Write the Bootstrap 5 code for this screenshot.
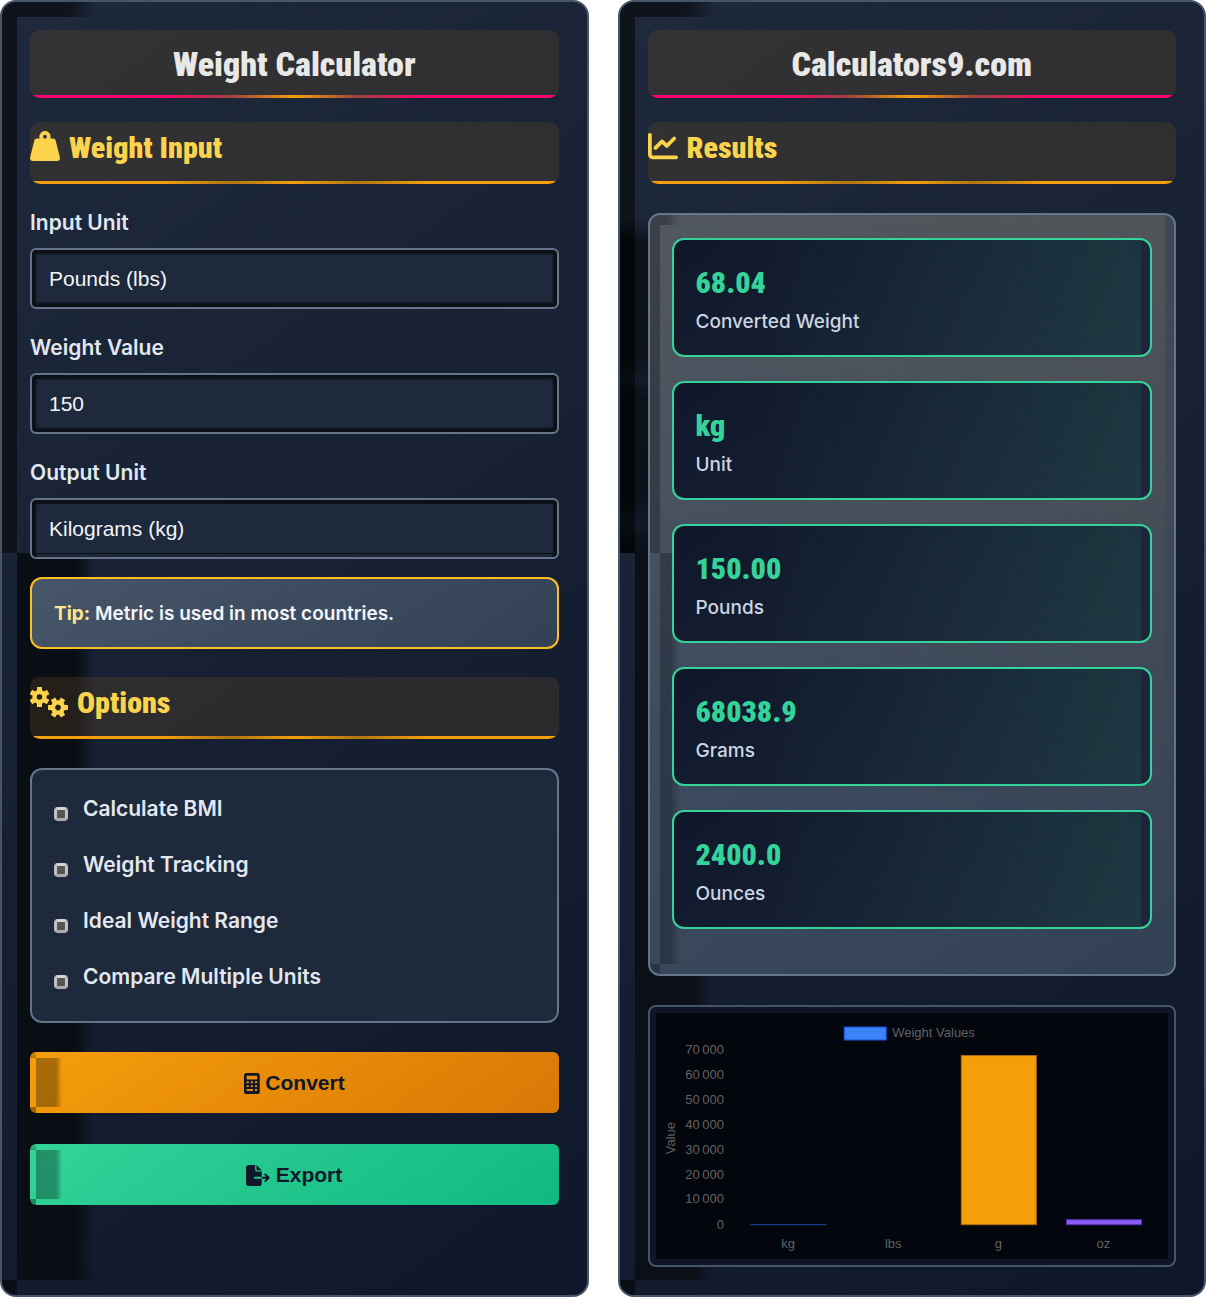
<!DOCTYPE html>
<html lang="en">
<head>
<meta charset="utf-8">
<meta name="viewport" content="width=device-width, initial-scale=1">
<title>Weight Calculator</title>
<link href="https://cdn.jsdelivr.net/npm/bootstrap@5.3.0/dist/css/bootstrap.min.css" rel="stylesheet">
<style>
:root{--cond:"Roboto Condensed","Liberation Sans Narrow",Roboto,sans-serif}
body{background:#fff;font-family:Inter,"Liberation Sans",sans-serif;color:#e2e8f0}
.calc-wrap{gap:29px}
.panel{flex:1 1 0;min-width:0;border:2px solid #475569;border-radius:16px;padding:28px;
  background:
    linear-gradient(#0e131c,#0e131c) 0 0/15px 551px no-repeat,
    linear-gradient(90deg,#0e131c 50px,#0e131c00) 15px 0/80px 15px no-repeat,
    linear-gradient(#090d14,#090d14) 0 100%/15px 15px no-repeat,
    linear-gradient(90deg,#090d14 58px,#090d1400) 15px 551px/78px calc(100% - 566px) no-repeat,
    linear-gradient(145deg,#1e293b,#0f172a)}
.panel-out{background:
    linear-gradient(#0000,#000b 25px,#000b 140px,#0006 160px,#000b 180px,#000b 280px,#0005 304px,#000b 328px,#000b) 0 216px/15px 335px no-repeat,
    linear-gradient(#0000,#0008 25px,#0008 140px,#0004 160px,#0008 180px,#0008 280px,#0004 304px,#0008 328px,#0008) 15px 216px/20px 335px no-repeat,
    linear-gradient(#0e131c,#0e131c) 0 0/15px 551px no-repeat,
    linear-gradient(90deg,#0e131c 50px,#0e131c00) 15px 0/80px 15px no-repeat,
    linear-gradient(#090d14,#090d14) 0 100%/15px 15px no-repeat,
    linear-gradient(90deg,#0b1017 58px,#0b101700) 15px 551px/78px calc(100% - 566px) no-repeat,
    linear-gradient(145deg,#1e293b,#0f172a)}
.bar-head{font-family:var(--cond);font-weight:900;border-radius:10px;margin:0 0 24px;
  background:linear-gradient(90deg,var(--edge) 25%,var(--mid) 38%,#f59e0b 50%,var(--mid) 62%,var(--edge) 75%) 0 100%/100% 3px no-repeat,rgba(99,73,38,.3)}
.bar-title{--edge:#ff006e;--mid:#a0413f;height:68px;line-height:68px;font-size:34px;text-align:center;color:#e8e8e6}
.bar-sub{--edge:#f59e0b;--mid:#b27509;height:62px;line-height:51px;font-size:30px;color:#fcd34d;display:flex;gap:9px}
.bar-sub svg{flex:none;margin-top:9px;fill:currentColor}
.fields{gap:24px}
.fields label{font-size:21px;line-height:30px;font-weight:600;margin-bottom:10px;display:block}
.field{display:block;width:100%;height:61px;padding:0 17px;border:2px solid #64748b;border-radius:6px;background:#1e293b;color:#f1f5f9;
  font:21px "Liberation Sans",sans-serif;appearance:none;box-shadow:inset 0 0 2px 4px #0a1016}
.field[type=number]{appearance:textfield}
.field-last{box-shadow:inset 0 4px 1px #0a1016,inset 4px 0 1px #0a1016,inset -4px 0 1px #0a1016;background:linear-gradient(#0a1016,#0a1016) 0 53px/100% 1px no-repeat #1e293b}
.tip{margin:18px 0 28px;height:72px;line-height:70px;padding:0 22px;border:2px solid #fbbf24;border-radius:12px;background:linear-gradient(145deg,#475569,#334155);font-size:19px;font-weight:600;color:#f1f5f9}
.tip b{color:#fde68a;font-weight:700}
.opts{margin:29px 0;padding:11px 22px 16px;border:2px solid #64748b;border-radius:12px;background:#1e293b}
.opts label{display:flex;align-items:center;gap:15px;height:56px;font-size:21px;font-weight:600}
.opts input{appearance:none;flex:none;width:14px;height:14px;margin:10px 0 0;border:3px solid;border-color:#d6d4d0 #c4c2be #aeaca8;border-radius:4px;background:#575757}
.act{display:block;width:100%;height:61px;border:0;border-radius:6px;font:bold 21px "Liberation Sans",sans-serif;color:#0f172a;margin-bottom:31px}
.act svg{height:21px;fill:currentColor;vertical-align:-4px}
.act-convert{--c1:#f59e0b;--c2:#d97706}
.act-export{--c1:#34d399;--c2:#10b981;margin-bottom:0}
.act{background:
  linear-gradient(#0001,#0004) 0 0/6px 6px no-repeat,
  linear-gradient(#0005,#0005) 0 100%/6px 6px no-repeat,
  linear-gradient(90deg,#00000050 20px,#0000) 6px 6px/26px 49px no-repeat,
  linear-gradient(145deg,var(--c1),var(--c2))}
.results{margin:29px 0;padding:23px 22px 45px;border:2px solid #64748b;border-radius:12px;display:flex;flex-direction:column;gap:24px;
  background:
  linear-gradient(#0004,#0004) 0 10px/10px 328px no-repeat,
  linear-gradient(90deg,#0004 16px,#0000) 0 0/30px 10px no-repeat,
  linear-gradient(90deg,#0004 10px,#0000) 10px 338px/20px calc(100% - 348px) no-repeat,
  linear-gradient(#0004,#0004) 0 100%/10px 10px no-repeat,
  linear-gradient(#334155aa,#33415500) 100% 0/9px 100% no-repeat,
  linear-gradient(200deg,#78603c4d,#78603c00 75%),
  linear-gradient(145deg,#475569,#334155)}
.res{height:119px;padding:24px 22px 0;border:2px solid #34d399;border-radius:12px;
  background:linear-gradient(#1e243a,#1e243a) 100% 0/9px 100% no-repeat,linear-gradient(75deg,#34d39900 20%,#34d3991a),linear-gradient(145deg,#0f172a,#1e293b)}
.res-num{font-family:var(--cond);font-weight:900;font-size:30px;line-height:38px;color:#34d399}
.res-cap{font-size:19px;line-height:40px;font-weight:500;color:#cbd5e1}
.plot{border:2px solid #475569;border-radius:8px;overflow:hidden;background:#03060d;box-shadow:inset 0 0 0 6px #0d1526}
.plot svg{display:block;width:100%;height:auto}
</style>
</head>
<body>
<main class="calc-wrap d-flex min-vh-100">
<section class="panel">
  <h1 class="bar-head bar-title">Weight Calculator</h1>
  <h2 class="bar-head bar-sub"><svg width="30" height="30" viewBox="0 0 512 512"><path d="M224 96a32 32 0 1 1 64 0 32 32 0 1 1-64 0zm122.5 32c3.5-10 5.500-20.800 5.500-32 0-53-43-96-96-96s-96 43-96 96c0 11.200 1.900 22 5.500 32H120c-22 0-41.200 15-46.600 36.400l-72 288c-3.600 14.300-.4 29.500 8.700 41.200S33.200 512 48 512h416c14.800 0 28.700-6.800 37.800-18.500s12.300-26.800 8.700-41.200l-72-288C433.200 143 414 128 392 128h-45.500z"/></svg>Weight Input</h2>
  <div class="fields d-flex flex-column">
    <div><label for="inUnit">Input Unit</label><select id="inUnit" class="field"><option>Pounds (lbs)</option></select></div>
    <div><label for="val">Weight Value</label><input id="val" type="number" class="field" value="150"></div>
    <div><label for="outUnit">Output Unit</label><select id="outUnit" class="field field-last"><option>Kilograms (kg)</option></select></div>
  </div>
  <div class="tip"><b>Tip:</b> Metric is used in most countries.</div>
  <h2 class="bar-head bar-sub"><svg width="38" height="32" viewBox="0 0 38 32"><g fill="none" stroke="currentColor"><g id="gear"><circle cx="9.500" cy="11" r="5" stroke-width="4.400"/><path stroke-width="5" stroke-linejoin="round" d="M9.500 5.500V1M9.500 16.500V21M4.700 8.200.9 6M14.300 8.200l3.800-2.200M4.700 13.800.9 16M14.300 13.800l3.800 2.200"/></g><use href="#gear" transform="translate(18.500 10.500) rotate(30 9.500 11)"/></g></svg>Options</h2>
  <div class="opts">
    <label><input type="checkbox">Calculate BMI</label>
    <label><input type="checkbox">Weight Tracking</label>
    <label><input type="checkbox">Ideal Weight Range</label>
    <label><input type="checkbox">Compare Multiple Units</label>
  </div>
  <button type="button" class="act act-convert"><svg viewBox="0 0 384 512"><path fill-rule="evenodd" d="M64 0h256a64 64 0 0 1 64 64v384a64 64 0 0 1-64 64H64a64 64 0 0 1-64-64V64A64 64 0 0 1 64 0zM64 64v96h256V64zM64 200v48h52v-48zM166 200v48h52v-48zM268 200v48h52v-48zM64 296v48h52v-48zM166 296v48h52v-48zM268 296v48h52v-48zM64 392v48h154v-48zM268 392v48h52v-48z"/></svg> Convert</button>
  <button type="button" class="act act-export"><svg viewBox="0 0 576 512"><path d="M0 64C0 28.700 28.700 0 64 0h160v128c0 17.700 14.300 32 32 32h128v128H216c-13.300 0-24 10.700-24 24s10.700 24 24 24h168v112c0 35.300-28.700 64-64 64H64c-35.300 0-64-28.700-64-64V64zm384 272v-48h110.100l-39-39c-9.400-9.400-9.400-24.600 0-33.900s24.600-9.400 33.900 0l80 80c9.400 9.400 9.400 24.600 0 33.900l-80 80c-9.400 9.400-24.600 9.400-33.900 0s-9.400-24.600 0-33.900l39-39H384zm0-208H256V0l128 128z"/></svg> Export</button>
</section>
<section class="panel panel-out">
  <h1 class="bar-head bar-title">Calculators9.com</h1>
  <h2 class="bar-head bar-sub"><svg width="30" height="30" viewBox="0 0 512 512"><path d="M64 64c0-17.700-14.300-32-32-32S0 46.300 0 64v336c0 44.200 35.800 80 80 80h400c17.700 0 32-14.300 32-32s-14.300-32-32-32H80c-8.800 0-16-7.200-16-16V64zm406.600 86.600c12.500-12.500 12.500-32.800 0-45.300s-32.800-12.500-45.300 0L320 210.700l-57.400-57.400c-12.500-12.500-32.800-12.500-45.300 0l-112 112c-12.500 12.500-12.500 32.800 0 45.300s32.800 12.500 45.300 0L240 221.300l57.400 57.400c12.500 12.500 32.800 12.500 45.300 0l128-128z"/></svg>Results</h2>
  <div class="results">
    <div class="res"><div class="res-num">68.04</div><div class="res-cap">Converted Weight</div></div>
    <div class="res"><div class="res-num">kg</div><div class="res-cap">Unit</div></div>
    <div class="res"><div class="res-num">150.00</div><div class="res-cap">Pounds</div></div>
    <div class="res"><div class="res-num">68038.9</div><div class="res-cap">Grams</div></div>
    <div class="res"><div class="res-num">2400.0</div><div class="res-cap">Ounces</div></div>
  </div>
  <div class="plot">
    <svg viewBox="650 1007 524 258" role="img" aria-label="Weight Values chart" font-family="Liberation Sans, sans-serif" font-size="13" fill="#626262">
      <rect x="844" y="1027" width="42" height="13" fill="#3b82f6" stroke="#1d4ed8"/>
      <text x="892" y="1037">Weight Values</text>
      <g text-anchor="end"><text x="724" y="1054">70&#8239;000</text><text x="724" y="1079">60&#8239;000</text><text x="724" y="1104">50&#8239;000</text><text x="724" y="1129">40&#8239;000</text><text x="724" y="1154">30&#8239;000</text><text x="724" y="1179">20&#8239;000</text><text x="724" y="1203">10&#8239;000</text><text x="724" y="1229">0</text></g>
      <text transform="translate(675 1138) rotate(-90)" text-anchor="middle">Value</text>
      <g text-anchor="middle"><text x="788" y="1248">kg</text><text x="893" y="1248">lbs</text><text x="998" y="1248">g</text><text x="1103" y="1248">oz</text></g>
      <rect x="750" y="1224" width="76" height="1" fill="#1d4ba8"/>
      <rect x="961" y="1055.500" width="75" height="169" fill="#f59e0b" stroke="#a9690a"/>
      <rect x="1066" y="1219.500" width="75" height="5" fill="#8b5cf6" stroke="#5b2fc0"/>
    </svg>
  </div>
</section>
</main>
<script src="https://cdn.jsdelivr.net/npm/bootstrap@5.3.0/dist/js/bootstrap.bundle.min.js"></script>
</body>
</html>
